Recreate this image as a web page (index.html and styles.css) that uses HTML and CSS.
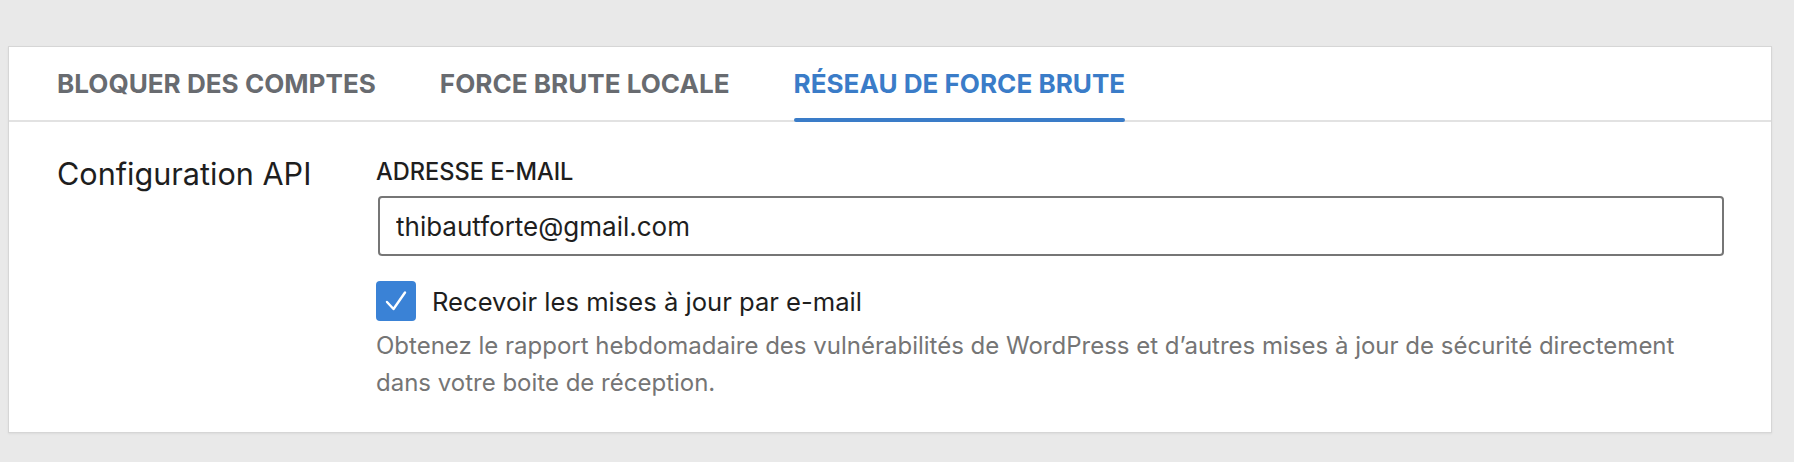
FILE: index.html
```html
<!DOCTYPE html>
<html lang="fr">
<head>
<meta charset="utf-8">
<title>Réseau de force brute</title>
<link rel="stylesheet" href="styles.css">
</head>
<body>
  <div class="panel">
    <nav class="tabs">
      <button class="tab">Bloquer des comptes</button>
      <button class="tab">Force brute locale</button>
      <button class="tab is-active">Réseau de force brute</button>
    </nav>
    <div class="row">
      <div class="row-title">Configuration API</div>
      <div class="row-fields">
        <label class="field-label" for="email">Adresse e-mail</label>
        <input class="text-input" id="email" type="text" value="thibautforte@gmail.com">
        <div class="check-row">
          <span class="checkbox">
            <svg viewBox="0 0 40 40" width="40" height="40" aria-hidden="true"><path d="M11 21 L17.5 28 L29 11.5" fill="none" stroke="#fff" stroke-width="2.4" stroke-linecap="round" stroke-linejoin="round"/></svg>
          </span>
          <span class="check-label">Recevoir les mises à jour par e-mail</span>
        </div>
        <p class="help">Obtenez le rapport hebdomadaire des vulnérabilités de WordPress et d’autres mises à jour de sécurité directement dans votre boite de réception.</p>
      </div>
    </div>
  </div>
</body>
</html>
```
FILE: styles.css
```css
html, body {
  margin: 0;
  padding: 0;
  background: #e9e9e9;
}
body {
  padding: 46px 22px 30px 8px;
  font-family: Inter, "Noto Sans", "Liberation Sans", sans-serif;
  color: #1e1e1e;
}
.panel {
  background: #fff;
  border: 1px solid #d6d6d6;
  box-shadow: 0 1px 2px rgba(0,0,0,0.06);
}
.tabs {
  display: flex;
  gap: 64px;
  padding: 0 48px;
  height: 73px;
  border-bottom: 2px solid #e2e2e2;
}
.tab {
  appearance: none;
  background: none;
  border: 0;
  margin: 0;
  padding: 0;
  font-family: inherit;
  font-size: 26.1px;
  font-weight: 700;
  text-transform: uppercase;
  color: #686b70;
  position: relative;
  cursor: pointer;
}
.tab.is-active {
  color: #3a7cc8;
}
.tab.is-active::after {
  content: "";
  position: absolute;
  left: 0;
  right: 0;
  bottom: -2px;
  height: 4px;
  border-radius: 2px;
  background: #3a7cc8;
}
.row {
  display: flex;
  padding: 32px 48px 31px;
}
.row-title {
  width: 319px;
  flex: none;
  font-size: 30.6px;
  line-height: 40px;
  color: #1e1e1e;
}
.row-fields {
  flex: 1;
  display: flex;
  flex-direction: column;
  align-items: flex-start;
}
.field-label {
  font-size: 23.6px;
  font-weight: 500;
  text-transform: uppercase;
  line-height: 28px;
  margin-top: 4px;
  margin-bottom: 10px;
}
.text-input {
  box-sizing: border-box;
  width: calc(100% - 1px);
  margin-left: 2px;
  height: 60px;
  border: 2px solid #767676;
  border-radius: 4px;
  padding: 0 16px;
  font-family: inherit;
  font-size: 26px;
  color: #1e1e1e;
  background: #fff;
}
.check-row {
  display: flex;
  align-items: center;
  gap: 16px;
  margin-top: 25px;
}
.checkbox {
  width: 40px;
  height: 40px;
  border-radius: 4px;
  background: #3a82d6;
  display: flex;
}
.check-label {
  font-size: 25.6px;
  color: #1e1e1e;
}
.help {
  margin: 6px 0 0;
  font-size: 24px;
  line-height: 37px;
  color: #757575;
}
```
